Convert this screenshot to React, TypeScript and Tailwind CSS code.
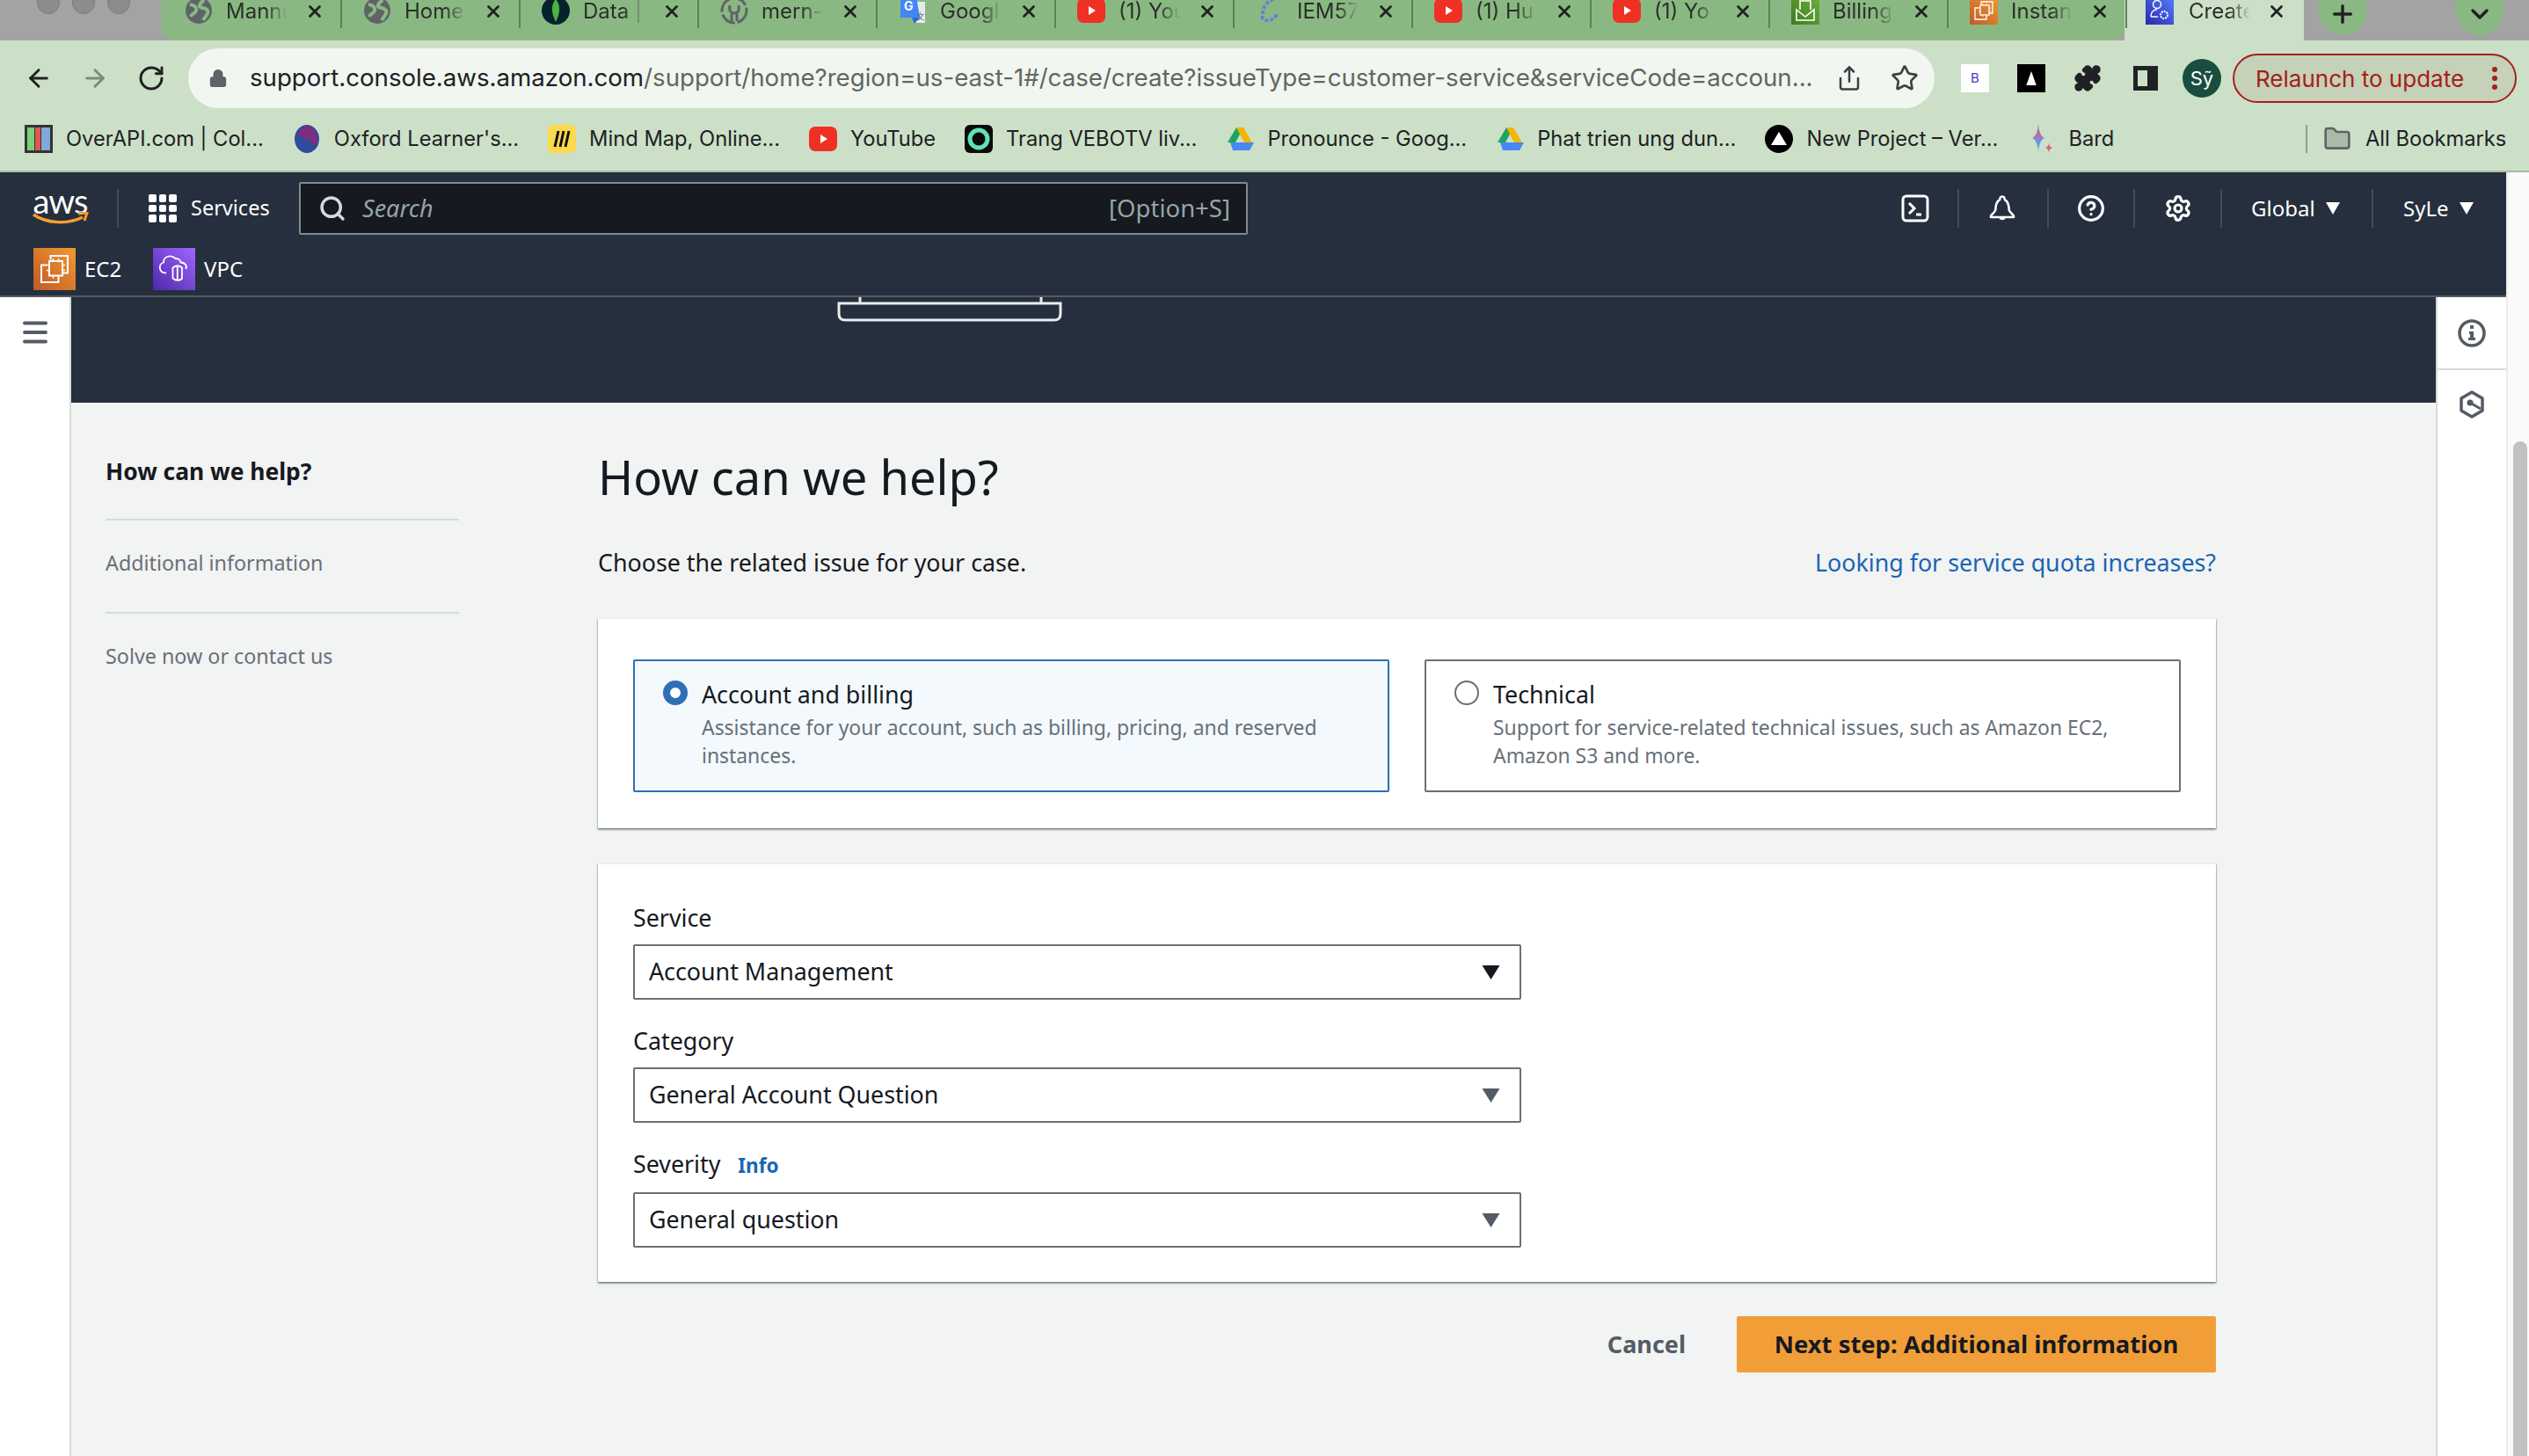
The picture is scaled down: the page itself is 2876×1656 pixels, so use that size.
import {
  ArrowLeft,
  ArrowRight,
  ChevronDown,
  CircleHelp,
  Folder,
  Lock,
  Menu,
  Plus,
  Puzzle,
  RotateCw,
  Search,
  Settings,
  Share,
  Star,
  X,
} from "lucide-react";

const Globe = () => (
  <svg viewBox="0 0 32 32" className="w-8 h-8">
    <circle cx="16" cy="16" r="15" fill="#5f6368" />
    <path d="M6 9c5 1 8 3 7 7s-5 3-6 7M22 4c-3 3-6 4-5 7s7 1 9 5-3 7-5 11" fill="none" stroke="#8ab882" strokeWidth="4" />
  </svg>
);

const Leaf = () => (
  <svg viewBox="0 0 32 32" className="w-8 h-8">
    <circle cx="16" cy="16" r="16" fill="#05232c" />
    <path d="M16 3c5 6 6 14 0 26c-6-12-5-20 0-26z" fill="#4db33d" />
  </svg>
);

const GitHub = () => (
  <svg viewBox="0 0 32 32" className="w-8 h-8">
    <circle cx="16" cy="16" r="14" fill="none" stroke="#5f6368" strokeWidth="3" strokeDasharray="18 3" />
    <path d="M11 10c-1 5 0 9 5 9s6-4 5-9" fill="none" stroke="#5f6368" strokeWidth="3" />
    <path d="M13 20v8M19 20v8" stroke="#5f6368" strokeWidth="3" />
  </svg>
);

const Translate = () => (
  <svg viewBox="0 0 32 32" className="w-8 h-8">
    <path d="M12 6h18v24H18z" fill="#e8eaed" />
    <path d="M2 0h18l4 24H2z" fill="#4285f4" />
    <path d="M15 24h9l-6 7z" fill="#3367d6" />
    <text x="6" y="16" fontSize="14" fontWeight="700" fill="#fff" fontFamily="Inter, sans-serif">G</text>
    <text x="20" y="26" fontSize="10" fill="#5f6368" fontFamily="Inter, sans-serif">文</text>
  </svg>
);

const YouTube = () => (
  <svg viewBox="0 0 32 32" className="w-8 h-8">
    <rect x="0" y="2" width="32" height="28" rx="7" fill="#ee3124" />
    <path d="M13 11l8 5-8 5z" fill="#fff" />
  </svg>
);

const Linked = () => (
  <svg viewBox="0 0 32 32" className="w-8 h-8">
    <path d="M20 3c-8 3-14 12-12 22c3 4 12 3 16-5" fill="none" stroke="#5c85d6" strokeWidth="4" strokeDasharray="4 2" />
  </svg>
);

const BillingIcon = () => (
  <svg viewBox="0 0 32 32" className="w-8 h-8">
    <defs>
      <linearGradient id="bill" x1="0" y1="1" x2="1" y2="0">
        <stop offset="0" stopColor="#3f7a1f" />
        <stop offset="1" stopColor="#6bae3a" />
      </linearGradient>
    </defs>
    <rect width="32" height="32" fill="url(#bill)" />
    <path d="M6 15l10 8 10-8v12H6zM10 15V5h12v10" fill="none" stroke="#fff" strokeWidth="1.6" />
  </svg>
);

const InstanceIcon = ({ size }: { size: string }) => (
  <svg viewBox="0 0 32 32" className={size}>
    <defs>
      <linearGradient id="ec2" x1="0" y1="1" x2="1" y2="0">
        <stop offset="0" stopColor="#c05a28" />
        <stop offset="1" stopColor="#f09a32" />
      </linearGradient>
    </defs>
    <rect width="32" height="32" fill="url(#ec2)" />
    <path d="M13 9V6h13v13h-4M10 13H6v13h13v-4" fill="none" stroke="#fff" strokeWidth="1.3" />
    <rect x="12" y="10" width="10" height="11" fill="none" stroke="#fff" strokeWidth="1.3" />
    <path d="M15 8v2M19 8v2M15 21v2M19 21v2M10 13h2M10 17h2M22 13h2M22 17h2" stroke="#fff" strokeWidth="1" />
  </svg>
);

const VpcIcon = () => (
  <svg viewBox="0 0 32 32" className="w-12 h-12">
    <defs>
      <linearGradient id="vpc" x1="0" y1="1" x2="1" y2="0">
        <stop offset="0" stopColor="#4d27a8" />
        <stop offset="1" stopColor="#a166ff" />
      </linearGradient>
    </defs>
    <rect width="32" height="32" fill="url(#vpc)" />
    <path d="M10 19c-6 0-6-7-2-8c0-5 6-6 9-3c3 0 4 2 4 3c3 0 5 2 4 5" fill="none" stroke="#fff" strokeWidth="1.2" />
    <path d="M15 15c2-2 5-2 7 0v8c-1 2-5 2-7 0zM18.500 14v11" fill="none" stroke="#fff" strokeWidth="1.2" />
  </svg>
);

const SupportIcon = () => (
  <svg viewBox="0 0 32 32" className="w-8 h-8">
    <defs>
      <linearGradient id="sup" x1="0" y1="1" x2="1" y2="0">
        <stop offset="0" stopColor="#2e27ad" />
        <stop offset="1" stopColor="#527fff" />
      </linearGradient>
    </defs>
    <rect width="32" height="32" fill="url(#sup)" />
    <circle cx="13" cy="9" r="4.500" fill="none" stroke="#fff" strokeWidth="1.500" />
    <path d="M6 23c0-5 3-8 7-8M6 23h8" fill="none" stroke="#fff" strokeWidth="1.500" />
    <circle cx="21" cy="21" r="4" fill="none" stroke="#fff" strokeWidth="2" strokeDasharray="2 1" />
  </svg>
);

const DriveIcon = () => (
  <svg viewBox="0 0 32 32" className="w-8 h-8">
    <path d="M12 3h8l-9 17H2z" fill="#1ea362" />
    <path d="M20 3l10 17h-9l-9-17z" fill="#f4b400" />
    <path d="M5 20h27l-5 9H8z" fill="#4688f4" />
  </svg>
);

const tabs = [
  { title: "Mannu", icon: <Globe /> },
  { title: "Home", icon: <Globe /> },
  { title: "Data |", icon: <Leaf /> },
  { title: "mern-", icon: <GitHub /> },
  { title: "Google", icon: <Translate /> },
  { title: "(1) You", icon: <YouTube /> },
  { title: "IEM57", icon: <Linked /> },
  { title: "(1) Hu", icon: <YouTube /> },
  { title: "(1) Yo", icon: <YouTube /> },
  { title: "Billing", icon: <BillingIcon /> },
  { title: "Instan", icon: <InstanceIcon size="w-8 h-8" /> },
];

const bookmarks = [
  {
    title: "OverAPI.com | Col...",
    icon: (
      <svg viewBox="0 0 32 32" className="w-8 h-8">
        <rect width="32" height="32" fill="#333" />
        <rect x="3" y="3" width="8" height="26" fill="#7bd17b" />
        <rect x="12" y="3" width="6" height="26" fill="#e2574c" />
        <rect x="19" y="3" width="10" height="26" fill="#7fa9d6" />
      </svg>
    ),
  },
  {
    title: "Oxford Learner's...",
    icon: (
      <svg viewBox="0 0 32 32" className="w-8 h-8">
        <ellipse cx="16" cy="16" rx="14" ry="16" fill="#2b4d9b" />
        <path d="M4 10L28 24C30 12 24 2 16 0z" fill="#7a2f7e" />
      </svg>
    ),
  },
  {
    title: "Mind Map, Online...",
    icon: (
      <svg viewBox="0 0 32 32" className="w-8 h-8">
        <rect width="32" height="32" rx="6" fill="#fcd94c" />
        <path d="M8 7l4 18M14 7l4 18M20 7l4 18" stroke="#111" strokeWidth="3" transform="matrix(-1 0 0 1 32 0)" />
      </svg>
    ),
  },
  { title: "YouTube", icon: <YouTube /> },
  {
    title: "Trang VEBOTV liv...",
    icon: (
      <svg viewBox="0 0 32 32" className="w-8 h-8">
        <rect width="32" height="32" rx="6" fill="#0a0a0a" />
        <circle cx="16" cy="16" r="10" fill="none" stroke="#5fe3b5" strokeWidth="5" />
      </svg>
    ),
  },
  { title: "Pronounce - Goog...", icon: <DriveIcon /> },
  { title: "Phat trien ung dun...", icon: <DriveIcon /> },
  {
    title: "New Project – Ver...",
    icon: (
      <svg viewBox="0 0 32 32" className="w-8 h-8">
        <circle cx="16" cy="16" r="16" fill="#000" />
        <path d="M16 8l9 15H7z" fill="#fff" />
      </svg>
    ),
  },
  {
    title: "Bard",
    icon: (
      <svg viewBox="0 0 32 32" className="w-8 h-8">
        <path d="M13 0c1 9 3 13 7 15c-4 2-6 6-7 15c-1-9-3-13-7-15c4-2 6-6 7-15z" fill="#6f8fe8" />
        <path d="M13 0c1 9 3 13 7 15h-14c4-2 6-6 7-15z" fill="#d96570" opacity="0.6" />
        <path d="M25 20c.5 4 1.500 5 4 6c-2.500 1-3.500 2-4 6c-.5-4-1.500-5-4-6c2.500-1 3.500-2 4-6z" fill="#d96570" />
      </svg>
    ),
  },
];

const Radio = ({ checked }: { checked?: boolean }) =>
  checked ? (
    <span className="w-7 h-7 rounded-full border-[8px] border-[#2f6fb5] bg-white shrink-0" />
  ) : (
    <span className="w-7 h-7 rounded-full border-2 border-[#687078] bg-white shrink-0" />
  );

const SelectBox = ({ value, dark }: { value: string; dark?: boolean }) => (
  <div className="h-[63px] w-[1010px] border-2 border-[#687078] rounded-[2px] bg-white flex items-center justify-between pl-4 pr-[22px] mt-[11px]">
    <span className="text-[26.8px] text-[#16191f]">{value}</span>
    <svg viewBox="0 0 20 16" className="w-[21px] h-4">
      <path d="M0 0h20L10 16z" fill={dark ? "#16191f" : "#545b64"} />
    </svg>
  </div>
);

const NavDivider = () => <div className="w-[2px] h-11 bg-[#414d5c]" />;

export default function App() {
  return (
    <div className="w-[2876px] h-[1656px] overflow-hidden flex flex-col bg-white font-['Noto_Sans',sans-serif]">
      {/* browser chrome */}
      <div className="bg-[#cce0c8] font-['Inter',sans-serif] h-[196px] border-b-2 border-[#a9baa6] shrink-0">
        <div className="h-[46px] flex bg-[#a3a3a3] overflow-hidden">
          <div className="w-[183px] relative">
            <div className="flex gap-[14px] pl-[42px] -mt-[10px]">
              <span className="w-[26px] h-[26px] rounded-full bg-[#8c8c8c] border border-[#7a7a7a]" />
              <span className="w-[26px] h-[26px] rounded-full bg-[#8c8c8c] border border-[#7a7a7a]" />
              <span className="w-[26px] h-[26px] rounded-full bg-[#8c8c8c] border border-[#7a7a7a]" />
            </div>
          </div>
          <div className="w-[2233px] bg-[#8ab882] rounded-bl-[16px] rounded-br-[16px] flex items-start">
            {tabs.map((t, i) => (
              <div key={i} className="w-[203px] h-[32px] flex items-start pl-[27px] relative">
                <div className="shrink-0 -mt-[4px] h-[32px] overflow-hidden">{t.icon}</div>
                <span className="ml-[15px] w-[70px] overflow-hidden whitespace-nowrap text-[24px] leading-[26px] text-[#2a2f2a] [mask-image:linear-gradient(to_right,black_65%,transparent)]">
                  {t.title}
                </span>
                <X className="w-[22px] h-[22px] ml-[20px] mt-[2px] text-[#202124]" strokeWidth={3} />
                <span className="absolute right-[-3px] top-0 w-[2px] h-[32px] bg-[#5f7f5a]" />
              </div>
            ))}
          </div>
          <div className="w-[204px] bg-[#cce0c8] flex items-start pl-[24px]">
            <div className="-mt-[4px] h-[32px] overflow-hidden">
              <SupportIcon />
            </div>
            <span className="ml-[17px] w-[70px] overflow-hidden whitespace-nowrap text-[24px] leading-[26px] text-[#2a2f2a] [mask-image:linear-gradient(to_right,black_65%,transparent)]">
              Create
            </span>
            <X className="w-[22px] h-[22px] ml-[19px] mt-[2px] text-[#202124]" strokeWidth={3} />
          </div>
          <div className="flex-1 bg-[#a3a3a3] rounded-bl-[16px] flex items-start justify-between pl-[16px] pr-[28px]">
            <div className="w-[56px] h-[56px] -mt-[16px] rounded-full bg-[#8ab882] flex items-center justify-center">
              <Plus className="w-8 h-8 text-[#202124] mt-2" strokeWidth={2.6} />
            </div>
            <div className="w-[56px] h-[56px] -mt-[16px] rounded-full bg-[#8ab882] flex items-center justify-center">
              <ChevronDown className="w-8 h-8 text-[#202124] mt-2" strokeWidth={2.6} />
            </div>
          </div>
        </div>

        <div className="h-[84px] flex items-center pl-[28px] pt-[2px]">
          <ArrowLeft className="w-[32px] h-[32px] text-[#202124]" strokeWidth={2.2} />
          <ArrowRight className="w-[32px] h-[32px] ml-[32px] text-[#7c8a7b]" strokeWidth={2.2} />
          <RotateCw className="w-[32px] h-[32px] ml-[32px] text-[#202124]" strokeWidth={2.2} />
          <div className="ml-[26px] w-[1986px] h-[68px] rounded-full bg-[#f1f6f0] flex items-center pl-[23px]">
            <Lock className="w-[22px] h-[26px] text-[#5f6368]" fill="#5f6368" />
            <span className="ml-[25px] w-[1778px] whitespace-nowrap text-[27.65px] text-[#5f6862]">
              <span className="text-[#202124]">support.console.aws.amazon.com</span>
              /support/home?region=us-east-1#/case/create?issueType=customer-service&amp;serviceCode=accoun...
            </span>
            <Share className="w-[30px] h-[32px] ml-[26px] text-[#3c4043]" strokeWidth={2} />
            <Star className="w-[32px] h-[32px] ml-[32px] text-[#3c4043]" strokeWidth={2} />
          </div>
          <div className="ml-[30px] w-8 h-8 bg-white flex items-center justify-center text-[15px] text-[#3f3fbf]">B</div>
          <div className="ml-[32px] w-8 h-8 bg-black flex items-center justify-center">
            <svg viewBox="0 0 10 14" className="w-[12px] h-[16px]">
              <path d="M5 0l5 14H0z" fill="#fff" />
            </svg>
          </div>
          <Puzzle className="ml-[32px] w-8 h-8 text-[#202124]" fill="#202124" />
          <div className="ml-[36px] w-[28px] h-[28px] border-[5px] border-r-[12px] border-[#202124]" />
          <div className="ml-[28px] w-[44px] h-[44px] rounded-full bg-[#1a4d40] flex items-center justify-center text-[22px] text-white">
            Sỹ
          </div>
          <div className="ml-[13px] w-[323px] h-[56px] rounded-full border-2 border-[#a52019] bg-[#c5d1b8] flex items-center pl-[24px] text-[26px] text-[#a52019] whitespace-nowrap">
            Relaunch to update
            <svg viewBox="0 0 6 26" className="w-[6px] h-[26px] ml-[32px]">
              <circle cx="3" cy="3" r="3" fill="#a52019" />
              <circle cx="3" cy="13" r="3" fill="#a52019" />
              <circle cx="3" cy="23" r="3" fill="#a52019" />
            </svg>
          </div>
        </div>

        <div className="h-[64px] flex items-center pl-[28px] -mt-[4px]">
          <div className="flex items-center gap-[33px] w-[2594px]">
            {bookmarks.map((b) => (
              <div key={b.title} className="flex items-center gap-[15px] whitespace-nowrap text-[23.7px] text-[#202124]">
                {b.icon}
                {b.title}
              </div>
            ))}
          </div>
          <div className="w-[2px] h-8 bg-[#8f9f8c]" />
          <Folder className="ml-[18px] w-8 h-8 text-[#5f6368]" fill="#a9baa6" />
          <span className="ml-[16px] whitespace-nowrap text-[23.7px] text-[#202124]">All Bookmarks</span>
        </div>
      </div>

      <div className="flex flex-1 min-h-0">
        <div className="w-[2850px] flex flex-col">
          {/* aws nav */}
          <div className="h-[142px] bg-[#252f3e] border-b-2 border-[#545b64] text-white shrink-0">
            <div className="h-[80px] flex items-center pl-[37px] pt-[2px]">
              <div className="w-[63px] h-[48px] flex flex-col items-center">
                <span className="text-[38px] leading-[30px] font-['Lato',sans-serif] tracking-[-1px]">aws</span>
                <svg viewBox="0 0 64 18" className="w-[64px] h-[18px] -mt-[2px]">
                  <path d="M1 3c16 11 40 11 56 3" fill="none" stroke="#f79c2d" strokeWidth="3.500" />
                  <path d="M52 2l10-1-3 9" fill="none" stroke="#f79c2d" strokeWidth="3" />
                </svg>
              </div>
              <div className="ml-[33px] w-[2px] h-11 bg-[#414d5c]" />
              <div className="ml-[34px] grid grid-cols-3 gap-[3px] w-8">
                {Array.from({ length: 9 }, (_, i) => (
                  <span key={i} className="w-[8.500px] h-[8.500px] rounded-[2px] bg-white" />
                ))}
              </div>
              <span className="ml-[16px] text-[23.5px] w-[90px]">Services</span>
              <div className="ml-[33px] w-[1079px] h-[60px] bg-[#16191f] border-2 border-[#7f8c8d] rounded-[2px] flex items-center justify-between pl-5 pr-[18px]">
                <div className="flex items-center gap-[18px]">
                  <Search className="w-[32px] h-[32px] text-[#d5dbdb]" strokeWidth={2.6} />
                  <span className="italic text-[27px] text-[#95a5a6]">Search</span>
                </div>
                <span className="text-[27.5px] text-[#95a5a6]">[Option+S]</span>
              </div>
              <svg viewBox="0 0 32 32" className="w-8 h-8 ml-[743px]">
                <rect x="2" y="2" width="28" height="28" rx="4" fill="none" stroke="#fff" strokeWidth="3" />
                <path d="M9 10l6 6-6 6M17 23h6" fill="none" stroke="#fff" strokeWidth="3" />
              </svg>
              <div className="ml-[32px]">
                <NavDivider />
              </div>
              <svg viewBox="0 0 32 32" className="w-8 h-8 ml-[33px]">
                <path d="M16 2.500c-1.800 0-2.800 1.500-2.800 3.500c-4 2-4.700 6-4.900 11.500c-.1 2-3.300 4.500-5.300 7v1.500h26v-1.500c-2-2.500-5.200-5-5.300-7c-.2-5.500-.9-9.500-4.900-11.500c0-2-1-3.500-2.800-3.500z" fill="none" stroke="#fff" strokeWidth="2.600" strokeLinejoin="round" />
                <path d="M12.500 27c.5 3 6.500 3 7 0z" fill="#fff" />
              </svg>
              <div className="ml-[35px]">
                <NavDivider />
              </div>
              <CircleHelp className="w-8 h-8 ml-[32px]" strokeWidth={2.4} />
              <div className="ml-[32px]">
                <NavDivider />
              </div>
              <Settings className="w-8 h-8 ml-[33px]" strokeWidth={2.4} />
              <div className="ml-[32px]">
                <NavDivider />
              </div>
              <span className="ml-[33px] text-[24px] w-[72px]">Global</span>
              <svg viewBox="0 0 16 14" className="w-4 h-[14px] ml-[13px]">
                <path d="M0 0h16L8 14z" fill="#fff" />
              </svg>
              <div className="ml-[36px]">
                <NavDivider />
              </div>
              <span className="ml-[34px] text-[24px] w-[52px]">SyLe</span>
              <svg viewBox="0 0 16 14" className="w-4 h-[14px] ml-[12px]">
                <path d="M0 0h16L8 14z" fill="#fff" />
              </svg>
            </div>
            <div className="flex items-center pl-[38px] pt-[6px] text-[24px]">
              <InstanceIcon size="w-12 h-12" />
              <span className="ml-[10px] w-[42px]">EC2</span>
              <div className="ml-[36px]">
                <VpcIcon />
              </div>
              <span className="ml-[10px]">VPC</span>
            </div>
          </div>

          <div className="flex flex-1 min-h-0">
            <div className="w-[81px] bg-white border-r-2 border-[#d5dbdb] pl-[24px] pt-[22px] shrink-0">
              <Menu className="w-[36px] h-[36px] text-[#545b64] -ml-[2px]" strokeWidth={2.6} />
            </div>

            <div className="flex-1 bg-[#f2f3f3] min-w-0">
              <div className="h-[120px] bg-[#252f3e]">
                <svg viewBox="0 0 256 28" className="w-[256px] h-[28px] ml-[871px]">
                  <path d="M26 0v8M232 0v8M2 7h252v12q0 7-7 7H9q-7 0-7-7z" fill="none" stroke="#eaeded" strokeWidth="3" />
                </svg>
              </div>

              <div className="flex">
                <div className="w-[599px] pl-[39px] pr-[158px] pt-[61px] shrink-0">
                  <div className="text-[26.4px] font-bold text-[#16191f] h-[34px] leading-[34px]">How can we help?</div>
                  <div className="h-[2px] bg-[#d5dbdb] mt-[37px]" />
                  <div className="text-[23.3px] text-[#687078] mt-[32px] h-[32px] leading-[32px]">Additional information</div>
                  <div className="h-[2px] bg-[#d5dbdb] mt-[40px]" />
                  <div className="text-[23.3px] text-[#687078] mt-[32px] h-[32px] leading-[32px]">Solve now or contact us</div>
                </div>

                <div className="w-[1840px] pt-[48px]">
                  <h1 className="text-[54.3px] leading-[72px] text-[#16191f]">How can we help?</h1>
                  <div className="flex items-center justify-between mt-[44px] h-[36px] text-[26.8px]">
                    <span className="text-[#16191f]">Choose the related issue for your case.</span>
                    <span className="text-[#1a64b4]">Looking for service quota increases?</span>
                  </div>

                  <div className="mt-[45px] bg-white h-[239px] px-10 pt-[46px] border-t border-[#eaeded] shadow-[0_2px_2px_0_rgba(0,28,36,0.35),1px_1px_1px_0_rgba(0,28,36,0.15),-1px_1px_1px_0_rgba(0,28,36,0.15)]">
                    <div className="flex gap-10">
                      <div className="w-[860px] h-[151px] border-2 border-[#2f6fb5] rounded-[2px] bg-[#f3f9fd] flex gap-[16px] pl-[32px] pt-[22px]">
                        <Radio checked />
                        <div>
                          <div className="text-[26.8px] leading-[32px] text-[#16191f]">Account and billing</div>
                          <div className="text-[22.9px] leading-[32px] text-[#687078] mt-[6px] w-[760px]">
                            Assistance for your account, such as billing, pricing, and reserved instances.
                          </div>
                        </div>
                      </div>
                      <div className="w-[860px] h-[151px] border-2 border-[#687078] rounded-[2px] bg-white flex gap-[16px] pl-[32px] pt-[22px]">
                        <Radio />
                        <div>
                          <div className="text-[26.8px] leading-[32px] text-[#16191f]">Technical</div>
                          <div className="text-[22.9px] leading-[32px] text-[#687078] mt-[6px] w-[760px]">
                            Support for service-related technical issues, such as Amazon EC2, Amazon S3 and more.
                          </div>
                        </div>
                      </div>
                    </div>
                  </div>

                  <div className="mt-[40px] bg-white h-[476px] px-10 pt-[42px] border-t border-[#eaeded] shadow-[0_2px_2px_0_rgba(0,28,36,0.35),1px_1px_1px_0_rgba(0,28,36,0.15),-1px_1px_1px_0_rgba(0,28,36,0.15)]">
                    <div className="text-[26.8px] leading-[38px] text-[#16191f]">Service</div>
                    <SelectBox value="Account Management" dark />
                    <div className="text-[26.8px] leading-[38px] text-[#16191f] mt-[28px]">Category</div>
                    <SelectBox value="General Account Question" />
                    <div className="text-[26.8px] leading-[38px] text-[#16191f] mt-[28px] flex items-baseline gap-5">
                      Severity
                      <span className="text-[22.5px] font-bold text-[#1a64b4]">Info</span>
                    </div>
                    <SelectBox value="General question" />
                  </div>

                  <div className="flex items-center justify-end mt-[39px]">
                    <span className="text-[27px] font-bold text-[#545b64] mr-[58px]">Cancel</span>
                    <div className="w-[545px] h-[64px] bg-[#f29e38] rounded-[2px] flex items-center justify-center text-[27.4px] font-bold text-[#16191f]">
                      Next step: Additional information
                    </div>
                  </div>
                </div>
              </div>
            </div>

            <div className="w-[80px] bg-white border-l-2 border-[#d5dbdb] shrink-0">
              <div className="h-[83px] border-b-2 border-[#d5dbdb] flex items-center justify-center">
                <svg viewBox="0 0 32 32" className="w-8 h-8">
                  <circle cx="16" cy="16" r="14" fill="none" stroke="#545b64" strokeWidth="3.500" />
                  <path d="M14 7h4v4h-4zM13 14h5v7h2v3h-8v-3h2v-4h-1z" fill="#545b64" />
                </svg>
              </div>
              <div className="flex justify-center pt-[23px]">
                <svg viewBox="0 0 32 32" className="w-8 h-8">
                  <path d="M16 2l12 7v14l-12 7-12-7V9z" fill="none" stroke="#545b64" strokeWidth="3.500" strokeLinejoin="round" />
                  <circle cx="14" cy="14" r="3.500" fill="#545b64" />
                  <path d="M14 14l12 7" stroke="#545b64" strokeWidth="3" />
                </svg>
              </div>
            </div>
          </div>
        </div>

        {/* page scrollbar */}
        <div className="w-[26px] bg-[#fafafa] border-l-2 border-[#ececec] pl-[6px] pt-[306px]">
          <div className="w-4 h-full rounded-t-full bg-[#c1c1c1]" />
        </div>
      </div>
    </div>
  );
}
